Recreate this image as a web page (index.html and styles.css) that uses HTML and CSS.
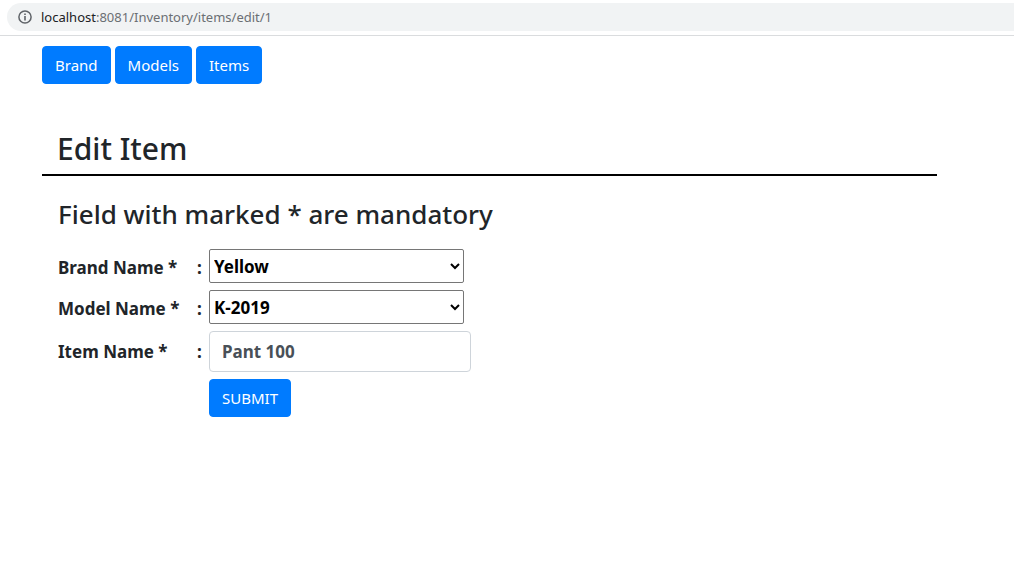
FILE: index.html
```html
<!DOCTYPE html>
<html lang="en">
<head>
<meta charset="utf-8">
<meta name="viewport" content="width=device-width, initial-scale=1">
<title>Edit Item</title>
<link rel="stylesheet" href="styles.css">
</head>
<body>
<header class="browser-bar">
  <div class="address">
    <svg class="info-icon" viewBox="0 0 14 14" aria-hidden="true">
      <circle cx="7" cy="7" r="6.1" fill="none" stroke="currentColor" stroke-width="1.5"/>
      <path d="M6.2 3.4h1.6v1.5H6.2zM6.2 6.1h1.6v4.5H6.2z" fill="currentColor"/>
    </svg>
    <span class="url"><span class="host">localhost</span>:8081/Inventory/items/edit/1</span>
  </div>
</header>
<main class="page">
  <nav class="nav">
    <a class="btn" href="#brand">Brand</a>
    <a class="btn" href="#models">Models</a>
    <a class="btn" href="#items">Items</a>
  </nav>
  <h1 class="title">Edit Item</h1>
  <form class="form">
    <h2 class="note">Field with marked * are mandatory</h2>
    <div class="fields">
      <label class="select-label" for="brand">Brand Name *</label><span class="colon select-label">:</span>
      <select class="select" id="brand"><option>Yellow</option></select>
      <label class="select-label" for="model">Model Name *</label><span class="colon select-label">:</span>
      <select class="select" id="model"><option>K-2019</option></select>
      <label for="item">Item Name *</label><span class="colon">:</span>
      <input class="input" id="item" type="text" value="Pant 100">
      <button class="btn submit" type="submit">SUBMIT</button>
    </div>
  </form>
</main>
</body>
</html>
```
FILE: styles.css
```css
* { box-sizing: border-box; }

body {
  margin: 0;
  background: #fff;
  color: #212529;
  font: 15px/24px "Segoe UI", "Noto Sans", "Open Sans", sans-serif;
}

.browser-bar {
  padding: 3px 0 4px 7px;
  border-bottom: 1px solid #dadcde;
}

.address {
  display: flex;
  align-items: center;
  gap: 9px;
  height: 28px;
  padding-left: 11px;
  border-radius: 14px 0 0 14px;
  background: #f1f3f4;
  color: #5f6368;
  font-size: 13px;
}

.info-icon { width: 14px; height: 14px; }
.url { color: #6b6f73; }
.host { color: #202124; }

.page { padding: 10px 77px 40px 42px; }

.nav { display: flex; gap: 4px; }

.btn {
  padding: 6px 12px;
  border: 1px solid #007bff;
  border-radius: 4px;
  background: #007bff;
  color: #fff;
  font: inherit;
  text-decoration: none;
  cursor: pointer;
}

.title {
  margin: 46px 0 0;
  padding: 0 15px 6px;
  border-bottom: 2px solid #000;
  font-size: 30px;
  font-weight: 500;
  line-height: 38px;
}

.form { padding: 21px 16px 0; }

.note {
  margin: 0 0 18px;
  font-size: 26px;
  font-weight: 500;
  line-height: 34px;
}

.fields {
  display: grid;
  grid-template-columns: 139px 12px minmax(0, 262px);
  row-gap: 7px;
  align-items: center;
  font-size: 17px;
  font-weight: 700;
}

.select-label { padding-top: 4px; }

.select {
  width: 255px;
  max-width: 100%;
  height: 34px;
  padding: 0;
  border: 1px solid #767676;
  border-radius: 2px;
  background: #fff;
  color: #000;
  font: inherit;
}

.input {
  width: 100%;
  height: 41px;
  padding: 6px 12px;
  border: 1px solid #ced4da;
  border-radius: 4px;
  background: #fff;
  color: #495057;
  font: inherit;
}

.submit {
  grid-column: 3;
  justify-self: start;
  font-size: 15px;
  font-weight: 400;
}
```
